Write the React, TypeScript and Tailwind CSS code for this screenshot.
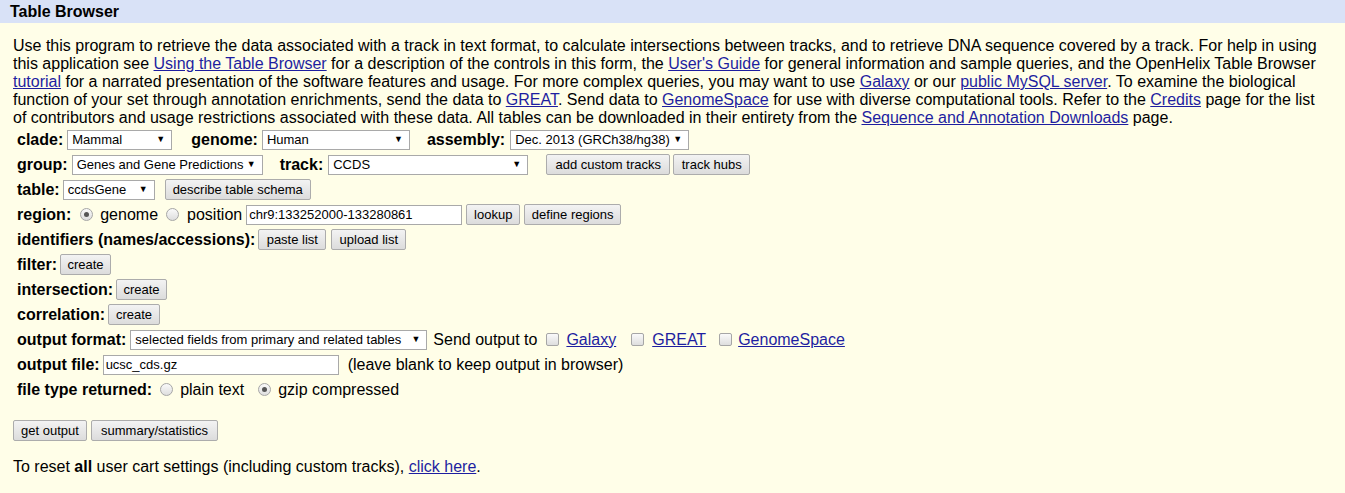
import React from 'react';

const Link = ({ children }: { children: React.ReactNode }) => (
  <a href="#" className="text-[#1e1ea0] underline">{children}</a>
);

const Select = ({ value, w }: { value: string; w: string }) => (
  <span className={`inline-flex h-[20px] items-center justify-between border border-[#a9a9a9] bg-white pl-[4px] pr-[6px] text-[13px] text-black ${w}`}>
    <span className="whitespace-nowrap">{value}</span>
    <span className="text-[9px] leading-none">▼</span>
  </span>
);

const Btn = ({ children, cls = '' }: { children: React.ReactNode; cls?: string }) => (
  <button className={`h-[21px] rounded-[2px] border border-[#acacac] bg-gradient-to-b from-[#f3f3f3] to-[#dcdcdc] px-[6px] text-[13px] leading-none text-black whitespace-nowrap ${cls}`}>
    {children}
  </button>
);

const Radio = ({ on = false, cls = '' }: { on?: boolean; cls?: string }) => (
  <span className={`inline-flex h-[13px] w-[13px] items-center justify-center rounded-full border border-[#a6a6a6] bg-gradient-to-b from-[#fafafa] to-[#dedede] ${cls}`}>
    {on && <span className="h-[5px] w-[5px] rounded-full bg-[#555]" />}
  </span>
);

const Check = ({ cls = '' }: { cls?: string }) => (
  <span className={`inline-block h-[13px] w-[13px] rounded-[2px] border border-[#a6a6a6] bg-gradient-to-b from-[#fafafa] to-[#dedede] ${cls}`} />
);

const Row = ({ children }: { children: React.ReactNode }) => (
  <div className="flex h-[25px] items-center pl-[4px] whitespace-nowrap">{children}</div>
);

const Label = ({ children }: { children: React.ReactNode }) => (
  <b className="font-bold">{children}</b>
);

export default function App() {
  return (
    <div className="min-h-[493px] bg-[#fffee8] font-['Liberation_Sans',Arial,sans-serif] text-[16px] leading-[18px] text-black">
      <div className="flex h-[23px] items-center bg-[#d9e2f7] pl-[10px]">
        <span className="font-bold">Table Browser</span>
      </div>
      <div className="pl-[13px] pr-[20px] pt-[14px]">
        <p>
          Use this program to retrieve the data associated with a track in text format, to calculate intersections between tracks, and to retrieve DNA sequence covered by a track. For help in using this application see <Link>Using the Table Browser</Link> for a description of the controls in this form, the <Link>User's Guide</Link> for general information and sample queries, and the OpenHelix Table Browser <Link>tutorial</Link> for a narrated presentation of the software features and usage. For more complex queries, you may want to use <Link>Galaxy</Link> or our <Link>public MySQL server</Link>. To examine the biological function of your set through annotation enrichments, send the data to <Link>GREAT</Link>. Send data to <Link>GenomeSpace</Link> for use with diverse computational tools. Refer to the <Link>Credits</Link> page for the list of contributors and usage restrictions associated with these data. All tables can be downloaded in their entirety from the <Link>Sequence and Annotation Downloads</Link> page.
        </p>

        <Row>
          <Label>clade:</Label>
          <span className="ml-[4px]"><Select value="Mammal" w="w-[105px]" /></span>
          <span className="ml-[19px]"><Label>genome:</Label></span>
          <span className="ml-[4px]"><Select value="Human" w="w-[148px]" /></span>
          <span className="ml-[17px]"><Label>assembly:</Label></span>
          <span className="ml-[5px]"><Select value="Dec. 2013 (GRCh38/hg38)" w="w-[179px]" /></span>
        </Row>
        <Row>
          <Label>group:</Label>
          <span className="ml-[4px]"><Select value="Genes and Gene Predictions" w="w-[191px]" /></span>
          <span className="ml-[17px]"><Label>track:</Label></span>
          <span className="ml-[5px]"><Select value="CCDS" w="w-[200px]" /></span>
          <Btn cls="ml-[18px] w-[124px]">add custom tracks</Btn>
          <Btn cls="ml-[3px] w-[77px]">track hubs</Btn>
        </Row>
        <Row>
          <Label>table:</Label>
          <span className="ml-[3px]"><Select value="ccdsGene" w="w-[92px]" /></span>
          <Btn cls="ml-[10px] w-[146px]">describe table schema</Btn>
        </Row>
        <Row>
          <Label>region:</Label>
          <Radio on cls="ml-[9px]" />
          <span className="ml-[7px]">genome</span>
          <Radio cls="ml-[8px]" />
          <span className="ml-[8px]">position</span>
          <span className="ml-[4px] flex h-[20px] w-[216px] items-center border border-[#a9a9a9] bg-white pl-[2px] text-[13px]">chr9:133252000-133280861</span>
          <Btn cls="ml-[4px] w-[54px]">lookup</Btn>
          <Btn cls="ml-[4px] w-[97px]">define regions</Btn>
        </Row>
        <Row>
          <Label>identifiers (names/accessions):</Label>
          <Btn cls="ml-[3px] w-[68px]">paste list</Btn>
          <Btn cls="ml-[5px] w-[75px]">upload list</Btn>
        </Row>
        <Row>
          <Label>filter:</Label>
          <Btn cls="ml-[3px] w-[51px]">create</Btn>
        </Row>
        <Row>
          <Label>intersection:</Label>
          <Btn cls="ml-[3px] w-[51px]">create</Btn>
        </Row>
        <Row>
          <Label>correlation:</Label>
          <Btn cls="ml-[3px] w-[52px]">create</Btn>
        </Row>
        <Row>
          <Label>output format:</Label>
          <span className="ml-[4px]"><Select value="selected fields from primary and related tables" w="w-[297px]" /></span>
          <span className="ml-[6px]">Send output to</span>
          <Check cls="ml-[9px]" />
          <span className="ml-[7px]"><Link>Galaxy</Link></span>
          <Check cls="ml-[15px]" />
          <span className="ml-[8px]"><Link>GREAT</Link></span>
          <Check cls="ml-[13px]" />
          <span className="ml-[6px]"><Link>GenomeSpace</Link></span>
        </Row>
        <Row>
          <Label>output file:</Label>
          <span className="ml-[3px] flex h-[20px] w-[236px] items-center border border-[#a9a9a9] bg-white pl-[2px] text-[13px]">ucsc_cds.gz</span>
          <span className="ml-[9px]">(leave blank to keep output in browser)</span>
        </Row>
        <Row>
          <Label>file type returned:</Label>
          <Radio cls="ml-[8px]" />
          <span className="ml-[7px]">plain text</span>
          <Radio cls="ml-[14px]" on />
          <span className="ml-[7px]">gzip compressed</span>
        </Row>

        <div className="mt-[18px] flex items-center gap-[4px]">
          <Btn cls="w-[74px]">get output</Btn>
          <Btn cls="w-[127px]">summary/statistics</Btn>
        </div>

        <p className="mt-[17px]">
          To reset <b>all</b> user cart settings (including custom tracks), <Link>click here</Link>.
        </p>
      </div>
    </div>
  );
}
